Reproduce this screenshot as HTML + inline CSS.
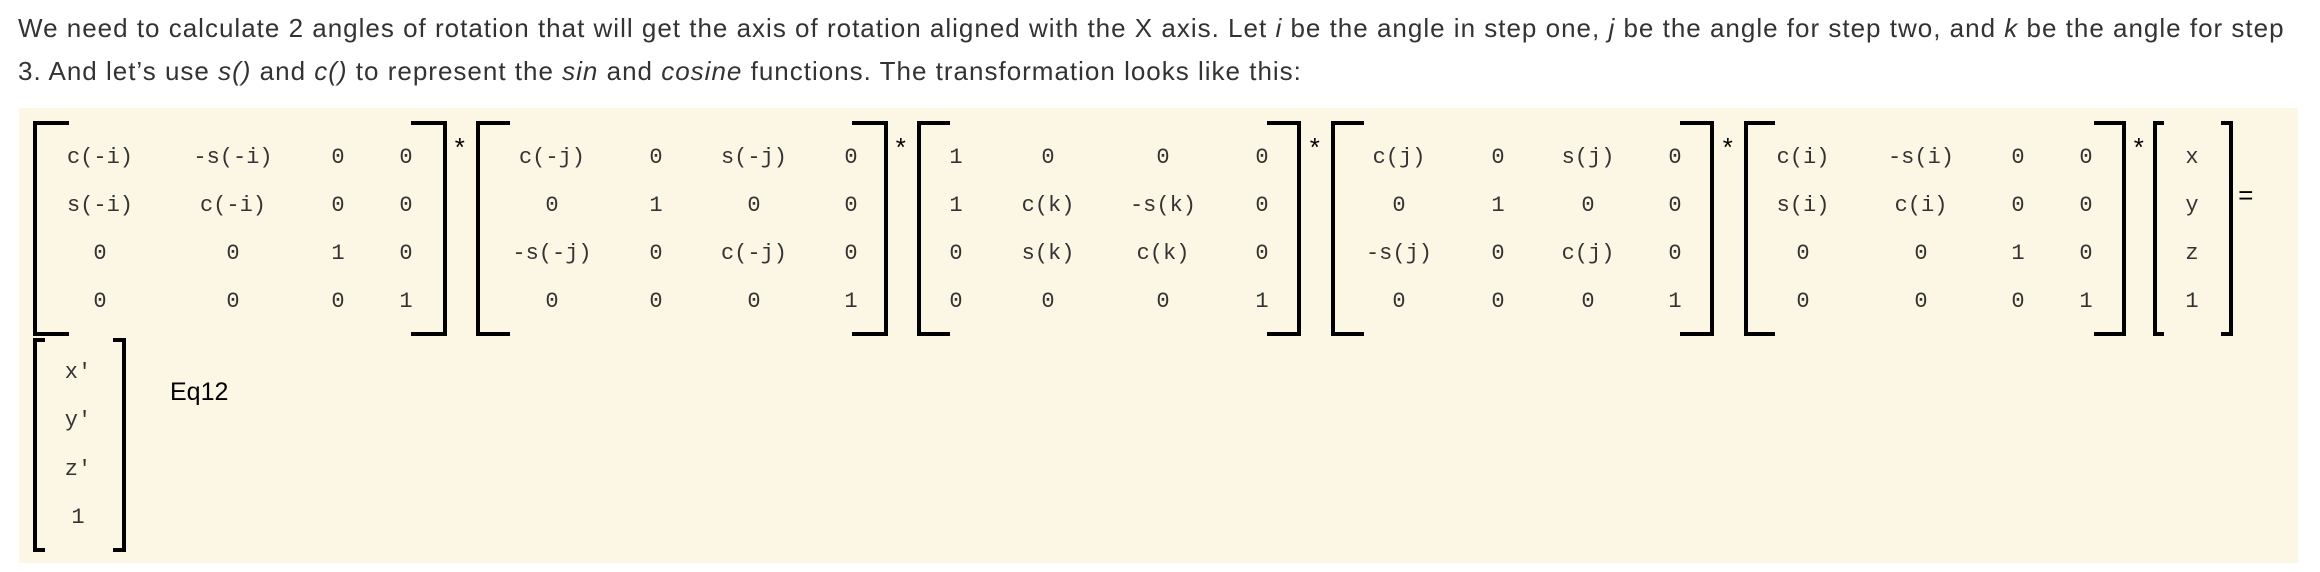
<!DOCTYPE html>
<html><head><meta charset="utf-8"><style>
html,body{margin:0;padding:0;background:#fff;width:2320px;height:572px;overflow:hidden;position:relative}
.p{position:absolute;left:18px;top:7px;font-family:"Liberation Sans",Arial,sans-serif;font-size:26px;letter-spacing:1px;line-height:43px;color:#333;white-space:nowrap}
.box{position:absolute;left:19px;top:108px;width:2279px;height:455px;background:#fcf6e4}
.c{position:absolute;width:200px;margin-left:-100px;text-align:center;font-family:"Liberation Mono",monospace;font-size:22px;line-height:26px;height:26px;margin-top:-13px;color:#333}
.lb,.rb{position:absolute;border:4px solid #000;box-sizing:border-box}
.lb{border-right:none}
.rb{border-left:none}
.op{position:absolute;font-family:"Liberation Mono",monospace;font-size:26px;line-height:26px;margin-top:-13px;margin-left:-8px;color:#000}
.eq{position:absolute;left:170px;top:378px;font-family:"Liberation Sans",Arial,sans-serif;font-size:25px;color:#000}
</style></head><body>
<div class="p">We need to calculate 2 angles of rotation that will get the axis of rotation aligned with the X axis. Let <i>i</i> be the angle in step one, <i>j</i> be the angle for step two, and <i>k</i> be the angle for step<br>3. And let’s use <i>s()</i> and <i>c()</i> to represent the <i>sin</i> and <i>cosine</i> functions. The transformation looks like this:</div>
<div class="box"></div>

<!-- M1 -->
<div class="lb" style="left:33px;top:121px;width:36px;height:215px"></div>
<div class="rb" style="left:411px;top:121px;width:36px;height:215px"></div>
<div class="c" style="left:100px;top:158px">c(-i)</div><div class="c" style="left:233px;top:158px">-s(-i)</div><div class="c" style="left:338px;top:158px">0</div><div class="c" style="left:406px;top:158px">0</div>
<div class="c" style="left:100px;top:206px">s(-i)</div><div class="c" style="left:233px;top:206px">c(-i)</div><div class="c" style="left:338px;top:206px">0</div><div class="c" style="left:406px;top:206px">0</div>
<div class="c" style="left:100px;top:254px">0</div><div class="c" style="left:233px;top:254px">0</div><div class="c" style="left:338px;top:254px">1</div><div class="c" style="left:406px;top:254px">0</div>
<div class="c" style="left:100px;top:302px">0</div><div class="c" style="left:233px;top:302px">0</div><div class="c" style="left:338px;top:302px">0</div><div class="c" style="left:406px;top:302px">1</div>
<div class="op" style="left:460px;top:150px">*</div>

<!-- M2 -->
<div class="lb" style="left:476px;top:121px;width:34px;height:215px"></div>
<div class="rb" style="left:852px;top:121px;width:36px;height:215px"></div>
<div class="c" style="left:552px;top:158px">c(-j)</div><div class="c" style="left:656px;top:158px">0</div><div class="c" style="left:754px;top:158px">s(-j)</div><div class="c" style="left:851px;top:158px">0</div>
<div class="c" style="left:552px;top:206px">0</div><div class="c" style="left:656px;top:206px">1</div><div class="c" style="left:754px;top:206px">0</div><div class="c" style="left:851px;top:206px">0</div>
<div class="c" style="left:552px;top:254px">-s(-j)</div><div class="c" style="left:656px;top:254px">0</div><div class="c" style="left:754px;top:254px">c(-j)</div><div class="c" style="left:851px;top:254px">0</div>
<div class="c" style="left:552px;top:302px">0</div><div class="c" style="left:656px;top:302px">0</div><div class="c" style="left:754px;top:302px">0</div><div class="c" style="left:851px;top:302px">1</div>
<div class="op" style="left:901px;top:150px">*</div>

<!-- M3 -->
<div class="lb" style="left:917px;top:121px;width:33px;height:215px"></div>
<div class="rb" style="left:1267px;top:121px;width:34px;height:215px"></div>
<div class="c" style="left:956px;top:158px">1</div><div class="c" style="left:1048px;top:158px">0</div><div class="c" style="left:1163px;top:158px">0</div><div class="c" style="left:1262px;top:158px">0</div>
<div class="c" style="left:956px;top:206px">1</div><div class="c" style="left:1048px;top:206px">c(k)</div><div class="c" style="left:1163px;top:206px">-s(k)</div><div class="c" style="left:1262px;top:206px">0</div>
<div class="c" style="left:956px;top:254px">0</div><div class="c" style="left:1048px;top:254px">s(k)</div><div class="c" style="left:1163px;top:254px">c(k)</div><div class="c" style="left:1262px;top:254px">0</div>
<div class="c" style="left:956px;top:302px">0</div><div class="c" style="left:1048px;top:302px">0</div><div class="c" style="left:1163px;top:302px">0</div><div class="c" style="left:1262px;top:302px">1</div>
<div class="op" style="left:1315px;top:150px">*</div>

<!-- M4 -->
<div class="lb" style="left:1331px;top:121px;width:33px;height:215px"></div>
<div class="rb" style="left:1680px;top:121px;width:34px;height:215px"></div>
<div class="c" style="left:1399px;top:158px">c(j)</div><div class="c" style="left:1498px;top:158px">0</div><div class="c" style="left:1588px;top:158px">s(j)</div><div class="c" style="left:1675px;top:158px">0</div>
<div class="c" style="left:1399px;top:206px">0</div><div class="c" style="left:1498px;top:206px">1</div><div class="c" style="left:1588px;top:206px">0</div><div class="c" style="left:1675px;top:206px">0</div>
<div class="c" style="left:1399px;top:254px">-s(j)</div><div class="c" style="left:1498px;top:254px">0</div><div class="c" style="left:1588px;top:254px">c(j)</div><div class="c" style="left:1675px;top:254px">0</div>
<div class="c" style="left:1399px;top:302px">0</div><div class="c" style="left:1498px;top:302px">0</div><div class="c" style="left:1588px;top:302px">0</div><div class="c" style="left:1675px;top:302px">1</div>
<div class="op" style="left:1728px;top:150px">*</div>

<!-- M5 -->
<div class="lb" style="left:1744px;top:121px;width:31px;height:215px"></div>
<div class="rb" style="left:2094px;top:121px;width:32px;height:215px"></div>
<div class="c" style="left:1803px;top:158px">c(i)</div><div class="c" style="left:1921px;top:158px">-s(i)</div><div class="c" style="left:2018px;top:158px">0</div><div class="c" style="left:2086px;top:158px">0</div>
<div class="c" style="left:1803px;top:206px">s(i)</div><div class="c" style="left:1921px;top:206px">c(i)</div><div class="c" style="left:2018px;top:206px">0</div><div class="c" style="left:2086px;top:206px">0</div>
<div class="c" style="left:1803px;top:254px">0</div><div class="c" style="left:1921px;top:254px">0</div><div class="c" style="left:2018px;top:254px">1</div><div class="c" style="left:2086px;top:254px">0</div>
<div class="c" style="left:1803px;top:302px">0</div><div class="c" style="left:1921px;top:302px">0</div><div class="c" style="left:2018px;top:302px">0</div><div class="c" style="left:2086px;top:302px">1</div>
<div class="op" style="left:2139px;top:150px">*</div>

<!-- M6 -->
<div class="lb" style="left:2153px;top:121px;width:11px;height:215px"></div>
<div class="rb" style="left:2221px;top:121px;width:12px;height:215px"></div>
<div class="c" style="left:2192px;top:158px">x</div>
<div class="c" style="left:2192px;top:206px">y</div>
<div class="c" style="left:2192px;top:254px">z</div>
<div class="c" style="left:2192px;top:302px">1</div>
<div class="op" style="left:2246px;top:197px">=</div>

<!-- result -->
<div class="lb" style="left:33px;top:338px;width:12px;height:214px"></div>
<div class="rb" style="left:113px;top:338px;width:13px;height:214px"></div>
<div class="c" style="left:78px;top:373px">x'</div>
<div class="c" style="left:78px;top:421px">y'</div>
<div class="c" style="left:78px;top:470px">z'</div>
<div class="c" style="left:78px;top:518px">1</div>
<div class="eq">Eq12</div>
</body></html>
